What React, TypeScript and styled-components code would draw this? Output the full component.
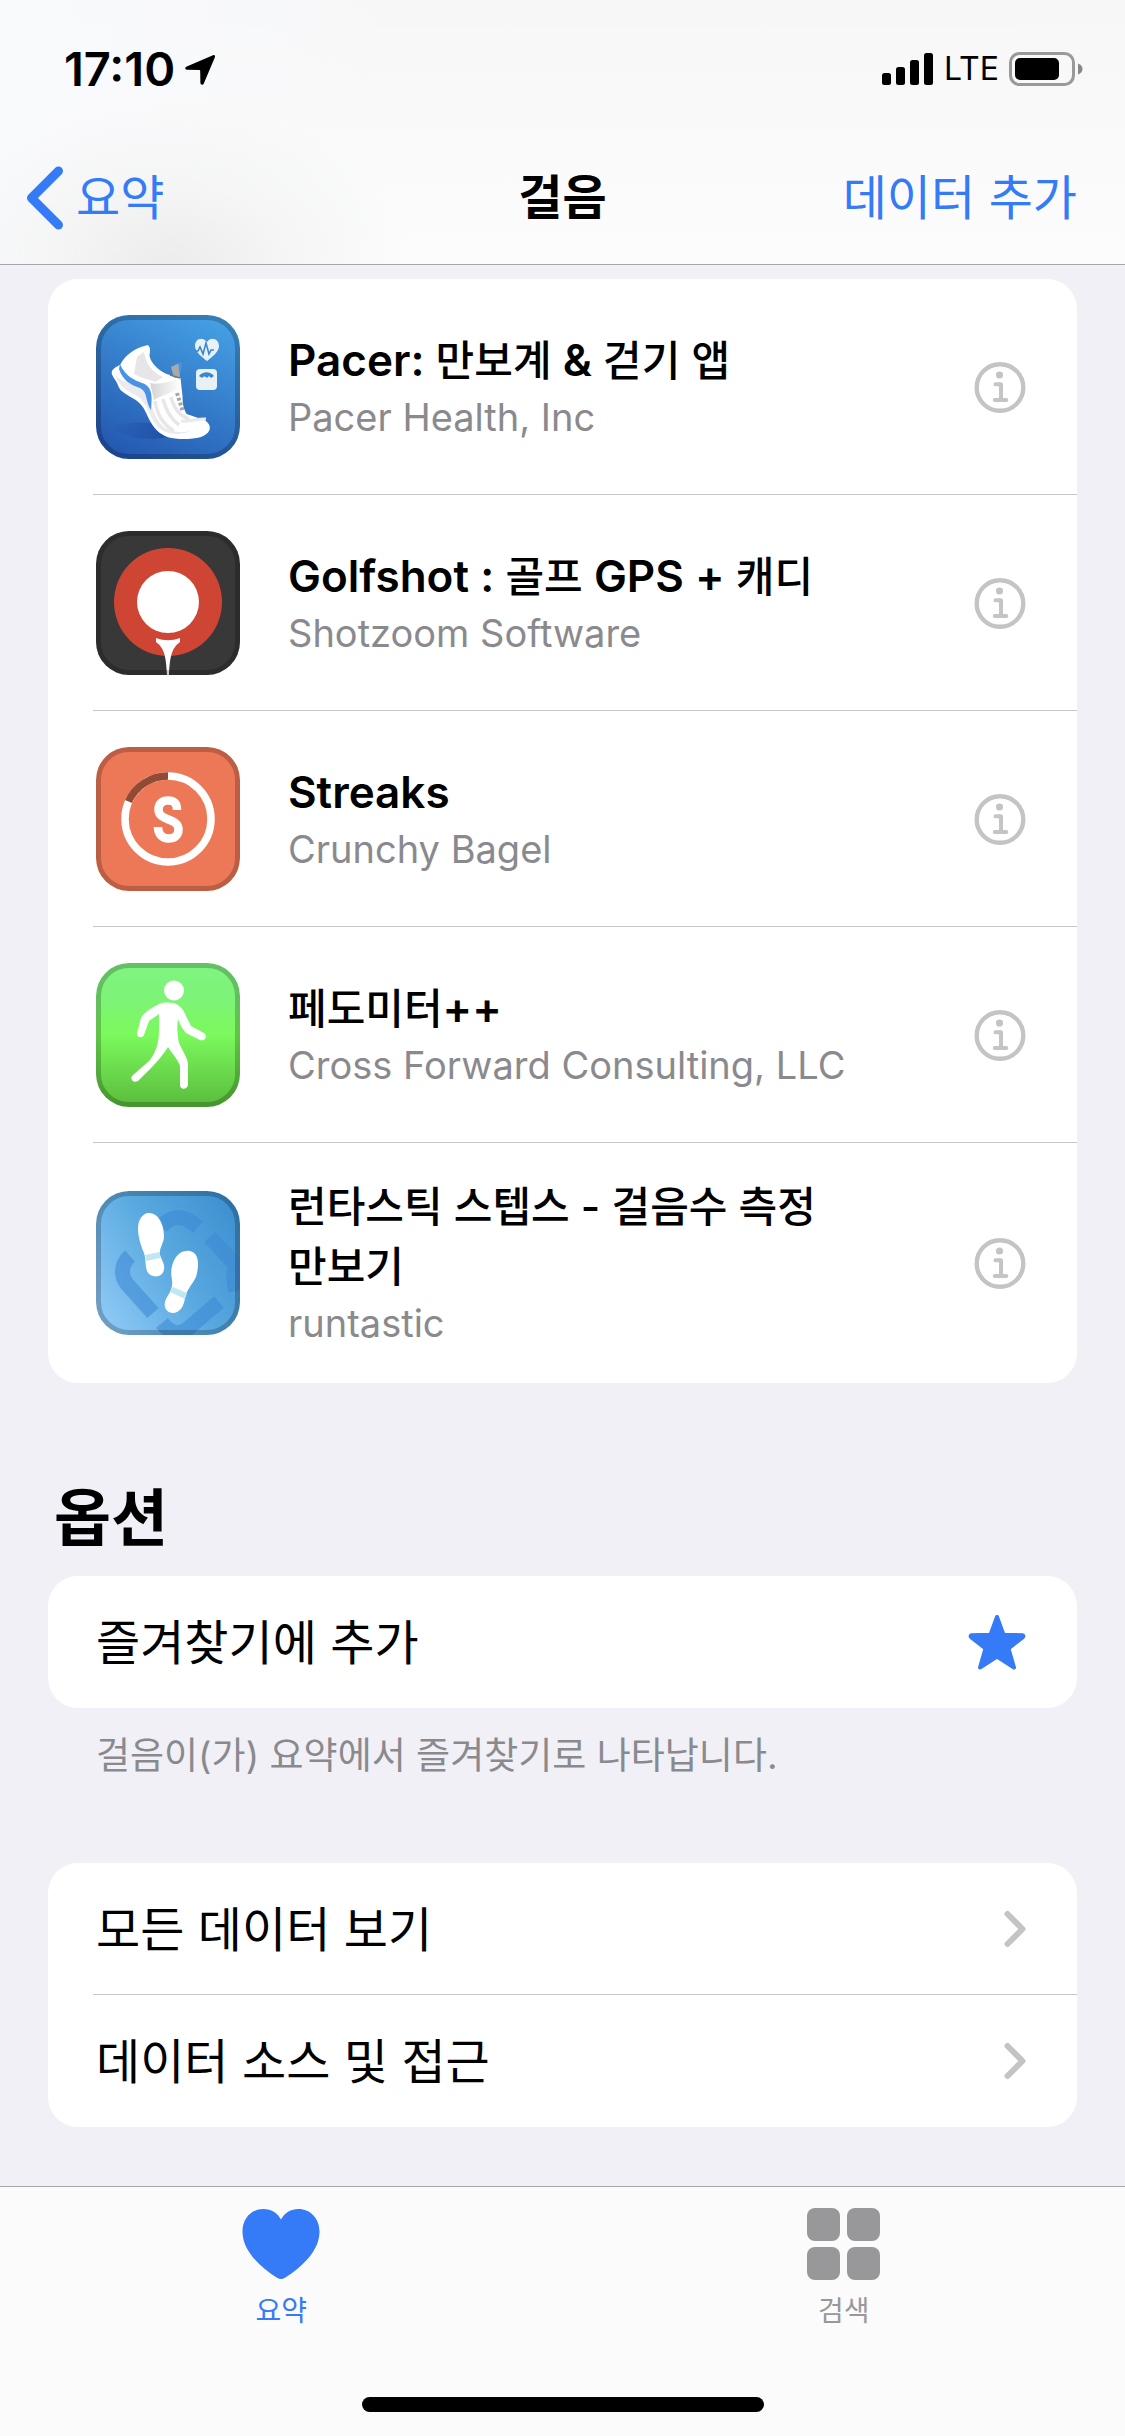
import React from "react";
import styled, { createGlobalStyle } from "styled-components";

const BLUE = "#357af6";
const GREY = "#8a8a8e";
const LINE = "#c6c6c8";

const GlobalStyle = createGlobalStyle`
  *, *::before, *::after { box-sizing: border-box; }
  body {
    margin: 0;
    background: #f1f0f6;
    color: #000;
    font-family: Inter, "Noto Sans CJK KR", sans-serif;
    font-size: 48px;
    word-break: keep-all;
  }
  h1, h2, h3, p, ul { margin: 0; padding: 0; }
  ul { list-style: none; }
  button { border: 0; padding: 0; background: none; font: inherit; color: inherit; cursor: pointer; }
  a { color: inherit; text-decoration: none; }
  svg { display: block; flex: none; }
`;

const Screen = styled.div`
  min-height: 100vh;
  display: flex;
  flex-direction: column;
`;

const Header = styled.header`
  border-bottom: 1px solid #a6a6aa;
  background:
    radial-gradient(ellipse 240px 160px at 170px 100%, #ececec 0%, rgba(242, 242, 242, 0.6) 50%, rgba(250, 250, 250, 0) 100%),
    linear-gradient(90deg, #f9fafc 0, rgba(249, 249, 250, 0) 400px),
    linear-gradient(#f7f7f8, #fcfcfc);
`;

const StatusBar = styled.div`
  display: flex;
  align-items: center;
  justify-content: space-between;
  height: 132px;
  padding: 6px 42px 0 64px;
`;

const StatusGroup = styled.div`
  display: flex;
  align-items: center;
  gap: 10px;
`;

const Clock = styled.time`
  font-size: 47px;
  font-weight: 600;
  line-height: 54px;
`;

const Carrier = styled.span`
  font-size: 32px;
  line-height: 42px;
`;

const NavBar = styled.nav`
  display: grid;
  grid-template-columns: 1fr auto 1fr;
  align-items: center;
  height: 132px;
  padding: 0 26px;
`;

const NavButton = styled.button<{ $end?: boolean }>`
  display: flex;
  align-items: center;
  gap: 12px;
  justify-self: ${(p) => (p.$end ? "end" : "start")};
  padding-right: ${(p) => (p.$end ? 22 : 0)}px;
  color: ${BLUE};
  line-height: 66px;
`;

const NavTitle = styled.h1`
  font-size: 48px;
  font-weight: 600;
  line-height: 66px;
`;

const Main = styled.main`
  flex: 1;
  padding: 14px 48px 59px;
`;

const Card = styled.ul`
  overflow: hidden;
  border-radius: 30px;
  background: #fff;
`;

const Row = styled.li`
  position: relative;

  & + &::before {
    content: "";
    position: absolute;
    top: -1px;
    left: 45px;
    right: 0;
    height: 1px;
    background: ${LINE};
  }
`;

const AppRow = styled(Row)`
  display: flex;
  align-items: center;
  min-height: 216px;
  padding: 34px 51px 34px 48px;
`;

const AppText = styled.div`
  flex: 1;
  padding: 0 80px 0 48px;
`;

const AppName = styled.h3`
  font-size: 42px;
  font-weight: 500;
  line-height: 60px;
`;

const Latin = styled.span`
  font-size: 44px;
  font-weight: 600;
  line-height: 48px;
`;

const Developer = styled.p`
  font-size: 38px;
  line-height: 52px;
  color: ${GREY};
`;

const SectionTitle = styled.h2`
  padding: 92px 6px 13px;
  font-size: 62px;
  font-weight: 700;
  line-height: 88px;
`;

const ActionButton = styled.button`
  display: flex;
  align-items: center;
  justify-content: space-between;
  width: 100%;
  height: 132px;
  padding: 0 51px 0 48px;
  text-align: left;
`;

const LinkRow = styled(ActionButton).attrs({ as: "a" })``;

const RowLabel = styled.span`
  padding-bottom: 6px;
`;

const Note = styled.p`
  padding: 20px 48px 79px;
  font-size: 37px;
  line-height: 56px;
  color: ${GREY};
`;

const TabBar = styled.footer`
  border-top: 1px solid #a6a6aa;
  background: #fbfbfc;
`;

const Tabs = styled.nav`
  display: grid;
  grid-template-columns: 1fr 1fr;
  padding-top: 21px;
`;

const Tab = styled.a<{ $active?: boolean }>`
  display: flex;
  flex-direction: column;
  align-items: center;
  gap: 11px;
  font-size: 28px;
  line-height: 40px;
  color: ${(p) => (p.$active ? BLUE : "#98989a")};
`;

const HomeIndicator = styled.div`
  width: 402px;
  height: 15px;
  margin: 66px auto 24px;
  border-radius: 8px;
  background: #000;
`;

const LocationArrow = () => (
  <svg width="31" height="31" viewBox="0 0 31 31" aria-hidden="true">
    <path d="M28 1.200 1.800 12.400c-2.400 1-1.800 3.400.4 3.400l12 .2c.8 0 1 .4 1 1l.2 11.800c0 2.200 2.500 2.600 3.400.6L29.900 3.200c.5-1.400-.5-2.500-1.900-2z" />
  </svg>
);

const Signal = () => (
  <svg width="52" height="32" viewBox="0 0 52 32" aria-hidden="true">
    <rect x="0" y="20" width="9" height="12" rx="2.500" />
    <rect x="14" y="14" width="9" height="18" rx="2.500" />
    <rect x="28" y="7" width="9" height="25" rx="2.500" />
    <rect x="42" y="0" width="9" height="32" rx="2.500" />
  </svg>
);

const Battery = () => (
  <svg width="74" height="34" viewBox="0 0 74 34" aria-hidden="true">
    <rect x="1.500" y="1.500" width="63" height="31" rx="9" fill="none" stroke="#999" strokeWidth="3" />
    <rect x="6" y="6" width="44" height="22" rx="5" />
    <path d="M69 11.500c3 1 4.500 3.200 4.500 5.500s-1.500 4.500-4.500 5.500z" fill="#888" />
  </svg>
);

const BackChevron = () => (
  <svg width="38" height="64" viewBox="0 0 38 64" aria-hidden="true">
    <path d="M32.500 5 5.500 32l27 27" fill="none" stroke={BLUE} strokeWidth="9" strokeLinecap="round" strokeLinejoin="round" />
  </svg>
);

const Disclosure = () => (
  <svg width="22" height="38" viewBox="0 0 22 38" aria-hidden="true">
    <path d="M3.500 4 18.500 19 3.500 34" fill="none" stroke="#c4c4c6" strokeWidth="6" strokeLinecap="round" strokeLinejoin="round" />
  </svg>
);

const InfoIcon = () => (
  <svg width="52" height="52" viewBox="0 0 52 52" aria-hidden="true">
    <circle cx="26" cy="26.500" r="23.300" fill="none" stroke="#c4c4c6" strokeWidth="4.400" />
    <circle cx="25.500" cy="14" r="3.600" fill="#c4c4c6" />
    <path d="M21.500 23.200h5.500V38M20.800 39h11.500" fill="none" stroke="#c4c4c6" strokeWidth="4" strokeLinecap="round" strokeLinejoin="round" />
  </svg>
);

const Star = () => (
  <svg width="58" height="58" viewBox="0 0 58 58" aria-hidden="true">
    <path
      d="M29 4 35.500 21.800l19 .4c1 .2 1.200 1.200.4 1.900L40.500 35.500l5.500 19L29 43.500 12 54.500l5.500-19L3.100 24.100c-.8-.7-.6-1.700.4-1.900l19-.4z"
      fill={BLUE}
      stroke={BLUE}
      strokeWidth="4"
      strokeLinejoin="round"
    />
  </svg>
);

const Heart = () => (
  <svg width="78" height="72" viewBox="0 0 78 72" aria-hidden="true">
    <path
      d="M39 11.500C35.500 5 29 1 21.500 1 9.500 1 .5 10.500.5 23.500c0 18.500 16 34.500 34.500 46.300 2.800 1.600 5.200 1.600 8 0C61.500 58 77.500 42 77.500 23.500 77.500 10.500 68.500 1 56.500 1 49 1 42.500 5 39 11.500z"
      fill={BLUE}
    />
  </svg>
);

const Grid = () => (
  <svg width="73" height="72" viewBox="0 0 73 72" fill="#98989a" aria-hidden="true">
    <rect width="33" height="33" rx="8" />
    <rect x="40" width="33" height="33" rx="8" />
    <rect y="39" width="33" height="33" rx="8" />
    <rect x="40" y="39" width="33" height="33" rx="8" />
  </svg>
);

/* App icons share one rounded tile with a translucent rim. */
const Tile = ({ id, fill, children }: { id: string; fill: string; children: React.ReactNode }) => (
  <svg width="144" height="144" viewBox="0 0 144 144" aria-hidden="true">
    <defs>
      <clipPath id={id + "-clip"}>
        <rect width="144" height="144" rx="33" />
      </clipPath>
      <linearGradient id="pacer" x1="0.8" y1="0" x2="0.3" y2="1">
        <stop offset="0" stopColor="#45a0e3" />
        <stop offset="1" stopColor="#255ab2" />
      </linearGradient>
      <linearGradient id="pedometer" x1="0" y1="0" x2="0" y2="1">
        <stop offset="0" stopColor="#80f482" />
        <stop offset="0.25" stopColor="#7df377" />
        <stop offset="0.5" stopColor="#7bf95c" />
        <stop offset="1" stopColor="#5abb3c" />
      </linearGradient>
      <linearGradient id="steps" x1="0" y1="0.8" x2="1" y2="0.2">
        <stop offset="0" stopColor="#8dc8f5" />
        <stop offset="0.5" stopColor="#5aaae0" />
        <stop offset="1" stopColor="#3e90d0" />
      </linearGradient>
      <linearGradient id="strap" x1="0" y1="0" x2="1" y2="0">
        <stop offset="0" stopColor="#d4d4d4" />
        <stop offset="1" stopColor="#fff" />
      </linearGradient>
      <linearGradient id="shade" x1="1" y1="0" x2="0" y2="0">
        <stop offset="0" stopColor="#1d49a0" stopOpacity="0.8" />
        <stop offset="1" stopColor="#1d49a0" stopOpacity="0" />
      </linearGradient>
    </defs>
    <g clipPath={`url(#${id}-clip)`}>
      <rect width="144" height="144" fill={fill} />
      {children}
      <rect x="2.500" y="2.500" width="139" height="139" rx="30.500" fill="none" stroke="#000" strokeOpacity="0.21" strokeWidth="5" />
    </g>
  </svg>
);

const PacerIcon = () => (
  <Tile id="app-pacer" fill="url(#pacer)">
    <path d="M16 112c12-5 28-5 42-4l14 14c-20 4-44 2-56-10z" fill="url(#shade)" />
    <path
      d="M24 50c6-12 18-18 28-20 3 3 2 6 1.500 11 2 8 9 14 17 18l14 4 2 18c0 8 1 12 4 18l18 6c5 3 6 7 5 10-3 7-13 9-26 9-12 0-20-2-27-9-6-6-9-15-13-22-6-10-16-11-23-18-3-4-3-8-6-11-3-5-4-7-1-10 2-2 4-3 6.500-4z"
      fill="#fff"
    />
    <path d="M41 42l7-5c2 12 9 21 19 25l-8 5c-7-3-14-4-21-8z" fill="#e6e6e8" />
    <path d="M19 60c10 10 24 8 31 17 5 8 5 18 14 31 6 8 18 11 32 8-16 6-31 3-38-9-5-9-8-18-14-24-8-6-20-8-25-23z" fill="#ebebed" />
    <path d="M59 86c2 14 9 24 19 30M67 84c3 12 8 20 16 26M75 82c3 12 9 19 18 22" fill="none" stroke="#e7e7e9" strokeWidth="3.500" />
    <path d="M24 49c5 12 14 16 22 19 9 3 11 10 9 27-6-9-3-18-11-22-9-3-17-7-21-19z" fill="#4893e3" />
    <path d="M54 68c11 2 21-2 30-5l1 11c-9 3-18 6-27 11z" fill="url(#strap)" />
    <path d="M75 52l8-4 1 14-6 1z" fill="#a9a9ab" />
    <path d="M82 48l4-1-1 10-1 2z" fill="#4893e3" />
    <path d="M74 60l10 3" stroke="#777" strokeWidth="1.500" />
    <path d="M81 78l6 19" stroke="#a7a7a9" strokeWidth="4" strokeDasharray="3 2" />
    <path d="M85 106c8 1 18-3 25-2" fill="none" stroke="#e9e9eb" strokeWidth="3" />
    <path d="M111 27c-5-6-12-3-12 4 0 6 7 11 12 15 5-4 12-9 12-15 0-7-8-10-12-4z" fill="#e9f1f8" />
    <path d="M99 36h3l2-4 3 7 3-11 3 11 2-4h3" fill="none" stroke="#3b87cc" strokeWidth="1.600" />
    <rect x="100" y="54" width="21" height="21" rx="4" fill="#e9f1f8" />
    <path d="M103 61c4-5 11-5 15 0l-3 2-2-2-2 2c-2-2-3-2-5 0z" fill="#3b87cc" />
  </Tile>
);

const GolfIcon = () => (
  <Tile id="app-golf" fill="#383838">
    <circle cx="72" cy="71" r="54" fill="#ce4534" />
    <circle cx="72" cy="71" r="31" fill="#fff" />
    <path d="M60 107c8 3 16 3 24 0v4c-8 6-10 13-11 33h-2c-1-20-3-27-11-33z" fill="#fff" />
  </Tile>
);

const StreaksIcon = () => (
  <Tile id="app-streaks" fill="#ed7857">
    <circle cx="72" cy="72" r="43" fill="none" stroke="#fff" strokeWidth="7.500" />
    <path d="M32.500 54.500A43 43 0 0 1 72 29" fill="none" stroke="#924a35" strokeWidth="7.500" />
    <path d="M81 63c0-7-3-9.500-9-9.500s-9.500 3-9.500 9c0 12 20 8 20 20 0 6-4 9-10 9s-10.500-4-10.500-11.500" fill="none" stroke="#fff" strokeWidth="8.500" />
  </Tile>
);

const PedometerIcon = () => (
  <Tile id="app-pedometer" fill="url(#pedometer)">
    <circle cx="78" cy="27.500" r="10" fill="#fff" />
    <path
      d="M63 41c6-2 14-2 19 1 4 3 6 6 8 11l5 10 13 7c4 3 1 9-4 7l-14-7c-4-4-6-9-8-14-1 8-1 14 1 24l7 14c2 4 2 7 2 12v16c-1 5-8 5-8 0v-19c-1-5-9-14-12-19-4 6-9 13-15 19L42 118c-5 3-9-3-5-6l16-14c7-8 10-19 10-31V51l-10 7-5 14c-2 4-8 2-7-2l4-15c3-6 11-10 18-14z"
      fill="#fff"
    />
  </Tile>
);

const StepsIcon = () => (
  <Tile id="app-steps" fill="url(#steps)">
    <path
      d="M65 36c12-14 24-11 37 0M114 46l27 30c-4 5-4 11-1 24M34 65c-10 9-9 21-3 28l26 29M66 132c11 14 20 11 29 3l28-24"
      fill="none"
      stroke="#3d8ad6"
      strokeOpacity="0.6"
      strokeWidth="15"
    />
    <path d="M52 22c10-1 16 11 16 23 0 8-5 11-4 19 2 6 5 9 4 14-1 10-14 9-17 2-2-6-1-11-3-18-4-9-6-18-6-24 0-9 4-15 10-16z" fill="#fff" />
    <path d="M94 60c10 2 9 16 6 26-4 8-9 12-11 21-1 7-4 15-13 15-7-1-9-8-6-14 4-7 7-11 6-19-3-12 3-31 18-29z" fill="#fff" />
    <path d="M49 64l15-3v6l-14 3zM77 96l14 6-2 6-15-7z" fill="#c2e6f2" />
  </Tile>
);

const apps = [
  { name: "Pacer: 만보계 & 걷기 앱", developer: "Pacer Health, Inc", Icon: PacerIcon },
  { name: "Golfshot : 골프 GPS + 캐디", developer: "Shotzoom Software", Icon: GolfIcon },
  { name: "Streaks", developer: "Crunchy Bagel", Icon: StreaksIcon },
  { name: "페도미터++", developer: "Cross Forward Consulting, LLC", Icon: PedometerIcon },
  { name: "런타스틱 스텝스 - 걸음수 측정 만보기", developer: "runtastic", Icon: StepsIcon },
];

/* Latin runs are set larger and heavier so that they balance the Hangul beside them. */
const renderName = (name: string) =>
  name.split(/([A-Za-z:&+]+)/).map((run, i) => (i % 2 ? <Latin key={i}>{run}</Latin> : run));

export default function App() {
  return (
    <Screen>
      <GlobalStyle />
      <Header>
        <StatusBar>
          <StatusGroup>
            <Clock>17:10</Clock>
            <LocationArrow />
          </StatusGroup>
          <StatusGroup>
            <Signal />
            <Carrier>LTE</Carrier>
            <Battery />
          </StatusGroup>
        </StatusBar>
        <NavBar>
          <NavButton type="button">
            <BackChevron />
            요약
          </NavButton>
          <NavTitle>걸음</NavTitle>
          <NavButton type="button" $end>
            데이터 추가
          </NavButton>
        </NavBar>
      </Header>
      <Main>
        <Card>
          {apps.map(({ name, developer, Icon }) => (
            <AppRow key={name}>
              <Icon />
              <AppText>
                <AppName>{renderName(name)}</AppName>
                <Developer>{developer}</Developer>
              </AppText>
              <button type="button" aria-label={name}>
                <InfoIcon />
              </button>
            </AppRow>
          ))}
        </Card>
        <SectionTitle>옵션</SectionTitle>
        <Card>
          <Row>
            <ActionButton type="button">
              <RowLabel>즐겨찾기에 추가</RowLabel>
              <Star />
            </ActionButton>
          </Row>
        </Card>
        <Note>걸음이(가) 요약에서 즐겨찾기로 나타납니다.</Note>
        <Card>
          <Row>
            <LinkRow href="#data">
              <RowLabel>모든 데이터 보기</RowLabel>
              <Disclosure />
            </LinkRow>
          </Row>
          <Row>
            <LinkRow href="#sources">
              <RowLabel>데이터 소스 및 접근</RowLabel>
              <Disclosure />
            </LinkRow>
          </Row>
        </Card>
      </Main>
      <TabBar>
        <Tabs>
          <Tab href="#summary" $active>
            <Heart />
            요약
          </Tab>
          <Tab href="#search">
            <Grid />
            검색
          </Tab>
        </Tabs>
        <HomeIndicator />
      </TabBar>
    </Screen>
  );
}
